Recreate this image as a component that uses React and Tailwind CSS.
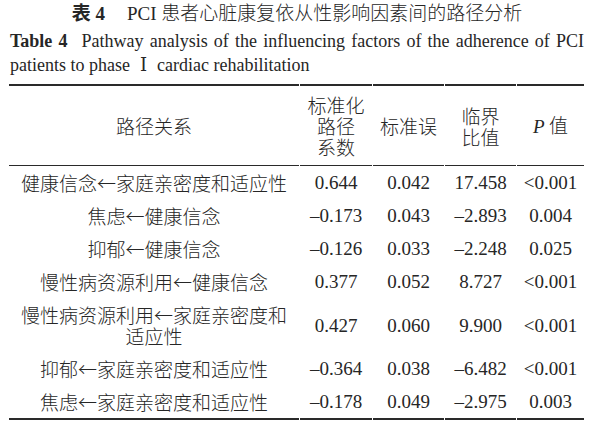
import React from 'react';

const rows = [
  ['健康信念←家庭亲密度和适应性', '0.644', '0.042', '17.458', '<0.001'],
  ['焦虑←健康信念', '–0.173', '0.043', '–2.893', '0.004'],
  ['抑郁←健康信念', '–0.126', '0.033', '–2.248', '0.025'],
  ['慢性病资源利用←健康信念', '0.377', '0.052', '8.727', '<0.001'],
  ['慢性病资源利用←家庭亲密度和适应性', '0.427', '0.060', '9.900', '<0.001'],
  ['抑郁←家庭亲密度和适应性', '–0.364', '0.038', '–6.482', '<0.001'],
  ['焦虑←家庭亲密度和适应性', '–0.178', '0.049', '–2.975', '0.003'],
];

const cjk = { fontFamily: '"Noto Sans CJK SC", sans-serif' };
const rule = 'border-[#2a2a2a]';

export default function App() {
  return (
    <div
      className="w-[594px] h-[425px] bg-white text-[#262626] overflow-hidden pt-[2px]"
      style={{ fontFamily: '"Liberation Serif", "Noto Sans CJK SC", serif' }}
    >
      {/* Chinese caption */}
      <div className="text-center text-[19px] leading-[24px]">
        <span className="font-bold">表 4</span>
        <span className="ml-[22px] font-light">PCI 患者心脏康复依从性影响因素间的路径分析</span>
      </div>

      {/* English caption */}
      <p className="mt-[4px] px-[10px] text-[18px] leading-[23px] text-justify">
        <span className="font-bold">Table 4</span>
        <span className="ml-[14px]">
          Pathway analysis of the influencing factors of the adherence of PCI patients to phase
          <span style={{ fontFamily: '"DejaVu Serif", serif' }} className="font-light mx-[10px]">Ⅰ</span>
          cardiac rehabilitation
        </span>
      </p>

      <table className="mt-[7px] ml-[8px] table-fixed border-separate border-spacing-x-[1px] border-spacing-y-0 text-[19px] leading-[21px] font-light">
        <colgroup>
          <col className="w-[290px]" />
          <col className="w-[72px]" />
          <col className="w-[71px]" />
          <col className="w-[71px]" />
          <col className="w-[67px]" />
        </colgroup>
        <thead style={cjk}>
          <tr>
            <th className={'font-light text-center align-middle border-t-2 border-b-[1.5px] py-2 ' + rule}>路径关系</th>
            <th className={'font-light text-center align-middle border-t-2 border-b-[1.5px] py-2 ' + rule}>
              标准化<br />路径<br />系数
            </th>
            <th className={'font-light text-center align-middle border-t-2 border-b-[1.5px] py-2 ' + rule}>标准误</th>
            <th className={'font-light text-center align-middle border-t-2 border-b-[1.5px] py-2 ' + rule}>
              临界<br />比值
            </th>
            <th className={'font-light text-center align-middle border-t-2 border-b-[1.5px] py-2 ' + rule}>
              <i className="font-normal" style={{ fontFamily: '"Liberation Serif", serif' }}>P</i> 值
            </th>
          </tr>
        </thead>
        <tbody>
          {rows.map((r, i) => {
            const edge = i === rows.length - 1 ? ' border-b-2 ' + rule : '';
            return (
              <tr key={i}>
                <td style={cjk} className={'text-center align-middle py-[6px] px-[6px]' + edge}>
                  {r[0]}
                </td>
                {r.slice(1).map((c, j) => (
                  <td key={j} className={'text-center align-middle py-[6px] px-0 font-normal' + edge}>
                    {c}
                  </td>
                ))}
              </tr>
            );
          })}
        </tbody>
      </table>
    </div>
  );
}
